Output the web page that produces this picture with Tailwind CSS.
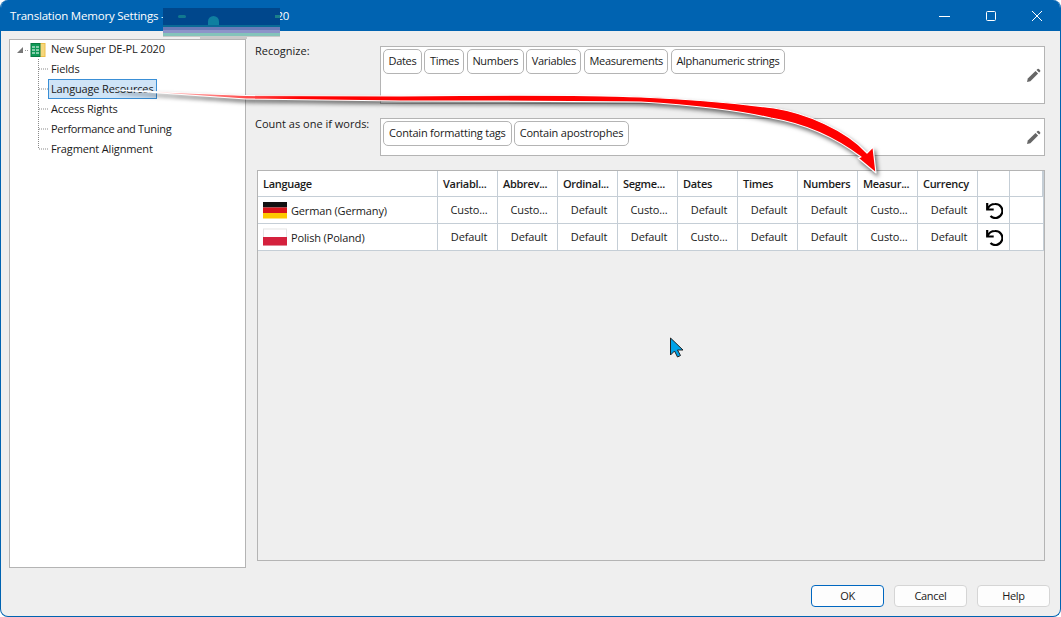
<!DOCTYPE html>
<html lang="en">
<head>
    <meta charset="UTF-8">
    <title>Translation Memory Settings</title>
    <script src="https://cdn.jsdelivr.net/npm/@tailwindcss/browser@4"></script>
</head>
<body class="bg-white font-['Open_Sans',sans-serif] text-[11px] tracking-[-0.3px] text-[#1a1a1a] overflow-hidden">
    <div class="relative w-[1061px] h-[617px] flex flex-col bg-[#efefef] border border-[#0063b1] border-t-0 rounded-t-lg rounded-b-lg overflow-hidden">

        <!-- Title bar -->
        <div class="h-[31px] shrink-0 -mx-px bg-[#0063b1] flex items-center text-white pl-[10px]">
            <span class="text-[11.5px] leading-none tracking-[-0.2px]">Translation Memory Settings -</span>
            <span class="ml-[112px] text-[11.5px] leading-none">20</span>
            <div class="ml-auto flex items-center">
                <svg class="w-[46px] h-[14px]" viewBox="0 0 46 14"><path d="M17 7.5h11" stroke="#fff" fill="none"/></svg>
                <svg class="w-[46px] h-[14px]" viewBox="0 0 46 14"><rect x="18.5" y="2.5" width="9" height="9" rx="1" stroke="#fff" fill="none"/></svg>
                <svg class="w-[46px] h-[14px] mr-[1px]" viewBox="0 0 46 14"><path d="M18 2l10 10M28 2l-10 10" stroke="#fff" fill="none"/></svg>
            </div>
        </div>

        <div class="flex flex-1 min-h-0 pt-2 pl-2 pr-[15px]">
            <!-- Tree -->
            <div class="w-[237px] h-[529px] shrink-0 bg-white border border-[#b4b4b4] relative tracking-[-0.15px]">
                <div class="h-[19px] flex items-center">
                    <svg class="ml-[6px] w-[30px] h-[14px]" viewBox="0 0 30 14">
                        <path d="M1 10l6-6v6z" fill="#777"/>
                        <path d="M9 7.500h3" stroke="#999" stroke-dasharray="1 1"/>
                        <rect x="21" y=".5" width="8" height="13" fill="#f6d77c" stroke="#eebe4a"/>
                        <rect x="15" y=".5" width="9" height="13" fill="#0f9a57" stroke="#0a7a43"/>
                        <path d="M16 4h3M20 4h3M16 7h3M20 7h3M16 10h3M20 10h3" stroke="#fff"/>
                    </svg>
                    <span class="ml-[5px]">New Super DE-PL 2020</span>
                </div>
                <div class="h-5 flex items-center pl-[41px]">Fields</div>
                <div class="h-5 flex items-center ml-[38px] w-[109px] border border-[#3a8fd6] bg-[#cfe4f7] pl-[2px]">Language Resources</div>
                <div class="h-5 flex items-center pl-[41px]">Access Rights</div>
                <div class="h-5 flex items-center pl-[41px] tracking-[-0.3px]">Performance and Tuning</div>
                <div class="h-5 flex items-center pl-[41px]">Fragment Alignment</div>
                <svg class="absolute left-[28px] top-[19px] w-[10px] h-[100px]" viewBox="0 0 10 100">
                    <path d="M.5 0v90M1 10h9M1 30h9M1 50h9M1 70h9M1 90h9" stroke="#888" fill="none" stroke-dasharray="1 1"/>
                </svg>
            </div>

            <!-- Right side -->
            <div class="flex-1 min-w-0 flex flex-col pl-[9px] pt-[7px]">
                <div class="flex items-start">
                    <div class="w-[125px] -mt-[3px] tracking-normal">Recognize:</div>
                    <div class="relative w-[665px] h-[58px] bg-white border border-[#b4b4b4] flex gap-[2.5px] pt-[2px] pl-[2px] items-start">
                        <span class="h-[25px] px-[4.5px] flex items-center bg-white border border-[#b4b4b4] rounded-[5px]">Dates</span>
                        <span class="h-[25px] px-[4.5px] flex items-center bg-white border border-[#b4b4b4] rounded-[5px]">Times</span>
                        <span class="h-[25px] px-[4.5px] flex items-center bg-white border border-[#b4b4b4] rounded-[5px]">Numbers</span>
                        <span class="h-[25px] px-[4.5px] flex items-center bg-white border border-[#b4b4b4] rounded-[5px]">Variables</span>
                        <span class="h-[25px] px-[4.5px] flex items-center bg-white border border-[#b4b4b4] rounded-[5px]">Measurements</span>
                        <span class="h-[25px] px-[4.5px] flex items-center bg-white border border-[#b4b4b4] rounded-[5px]">Alphanumeric strings</span>
                        <svg class="absolute right-[3px] top-[21px] w-[15px] h-[15px]" viewBox="0 0 15 15"><path d="M1 14l.8-3.400L9.500 3l2.600 2.600L4.400 13.200z" fill="#666"/><path d="M10.500 2l1-1a1 1 0 0 1 1.400 0l1.200 1.200a1 1 0 0 1 0 1.400l-1 1z" fill="#666"/></svg>
                    </div>
                </div>
                <div class="flex items-start mt-[14px]">
                    <div class="w-[125px] -mt-[2px] tracking-normal">Count as one if words:</div>
                    <div class="relative w-[665px] h-[38px] bg-white border border-[#b4b4b4] flex gap-[2px] pt-[2px] pl-[2px] items-start tracking-[-0.2px]">
                        <span class="h-[25px] px-[5px] flex items-center bg-white border border-[#b4b4b4] rounded-[5px]">Contain formatting tags</span>
                        <span class="h-[25px] px-[5px] flex items-center bg-white border border-[#b4b4b4] rounded-[5px]">Contain apostrophes</span>
                        <svg class="absolute right-[3px] top-[11px] w-[15px] h-[15px]" viewBox="0 0 15 15"><path d="M1 14l.8-3.400L9.500 3l2.600 2.600L4.400 13.200z" fill="#666"/><path d="M10.500 2l1-1a1 1 0 0 1 1.400 0l1.200 1.200a1 1 0 0 1 0 1.400l-1 1z" fill="#666"/></svg>
                    </div>
                </div>

                <!-- Language table -->
                <div class="mt-[14px] ml-[2px] w-[788px] h-[391px] border border-[#b4b4b4] bg-[#efefef] tracking-[-0.15px]">
                    <div class="grid grid-cols-[180px_repeat(9,60px)_32px_34px] bg-white">
                        <div class="h-[26px] flex items-center pl-[5px] pt-[1px] font-semibold tracking-[-0.3px] border-r border-b border-[#c5ced6]">Language</div>
                        <div class="h-[26px] flex items-center pl-[5px] pt-[1px] font-semibold tracking-[-0.3px] border-r border-b border-[#c5ced6]">Variabl...</div>
                        <div class="h-[26px] flex items-center pl-[5px] pt-[1px] font-semibold tracking-[-0.3px] border-r border-b border-[#c5ced6]">Abbrev...</div>
                        <div class="h-[26px] flex items-center pl-[5px] pt-[1px] font-semibold tracking-[-0.3px] border-r border-b border-[#c5ced6]">Ordinal...</div>
                        <div class="h-[26px] flex items-center pl-[5px] pt-[1px] font-semibold tracking-[-0.3px] border-r border-b border-[#c5ced6]">Segme...</div>
                        <div class="h-[26px] flex items-center pl-[5px] pt-[1px] font-semibold tracking-[-0.3px] border-r border-b border-[#c5ced6]">Dates</div>
                        <div class="h-[26px] flex items-center pl-[5px] pt-[1px] font-semibold tracking-[-0.3px] border-r border-b border-[#c5ced6]">Times</div>
                        <div class="h-[26px] flex items-center pl-[5px] pt-[1px] font-semibold tracking-[-0.3px] border-r border-b border-[#c5ced6]">Numbers</div>
                        <div class="h-[26px] flex items-center pl-[5px] pt-[1px] font-semibold tracking-[-0.3px] border-r border-b border-[#c5ced6]">Measur...</div>
                        <div class="h-[26px] flex items-center pl-[5px] pt-[1px] font-semibold tracking-[-0.3px] border-r border-b border-[#c5ced6]">Currency</div>
                        <div class="h-[26px] border-r border-b border-[#c5ced6]"></div>
                        <div class="h-[26px] border-r-2 border-b border-[#c5ced6]"></div>

                        <div class="h-[27px] flex items-center pl-[5px] border-r border-b border-[#c5ced6]">
                            <svg class="w-6 h-[18px] mr-[4px]" viewBox="0 0 24 18"><rect y="1" width="24" height="5.500" fill="#111"/><rect y="6.500" width="24" height="5.500" fill="#d8141c"/><rect y="12" width="24" height="5.500" fill="#fdc800"/></svg>
                            <span class="pt-[2px]">German (Germany)</span>
                        </div>
                        <div class="h-[27px] flex items-center justify-center pl-[3px] border-r border-b border-[#c5ced6]">Custo...</div>
                        <div class="h-[27px] flex items-center justify-center pl-[3px] border-r border-b border-[#c5ced6]">Custo...</div>
                        <div class="h-[27px] flex items-center justify-center pl-[3px] border-r border-b border-[#c5ced6]">Default</div>
                        <div class="h-[27px] flex items-center justify-center pl-[3px] border-r border-b border-[#c5ced6]">Custo...</div>
                        <div class="h-[27px] flex items-center justify-center pl-[3px] border-r border-b border-[#c5ced6]">Default</div>
                        <div class="h-[27px] flex items-center justify-center pl-[3px] border-r border-b border-[#c5ced6]">Default</div>
                        <div class="h-[27px] flex items-center justify-center pl-[3px] border-r border-b border-[#c5ced6]">Default</div>
                        <div class="h-[27px] flex items-center justify-center pl-[3px] border-r border-b border-[#c5ced6]">Custo...</div>
                        <div class="h-[27px] flex items-center justify-center pl-[3px] border-r border-b border-[#c5ced6]">Default</div>
                        <div class="h-[27px] flex items-center justify-center border-r border-b border-[#c5ced6]">
                            <svg class="w-[18px] h-[18px]" viewBox="0 0 18 18"><path d="M2.500 8C4 4.500 6.500 3 10 3a7 7 0 1 1-4.500 12" fill="none" stroke="#000" stroke-width="2.200"/><path d="M2.200 2v6.500h6.500" fill="none" stroke="#000" stroke-width="2.200"/></svg>
                        </div>
                        <div class="h-[27px] border-r border-b border-[#c5ced6]"></div>

                        <div class="h-[27px] flex items-center pl-[5px] border-r border-b border-[#c5ced6]">
                            <svg class="w-6 h-[18px] mr-[4px]" viewBox="0 0 24 18"><rect y=".5" width="24" height="17" fill="#e4e4e4"/><rect x="1" y="1.500" width="22" height="7.500" fill="#fff"/><rect y="9" width="24" height="8.500" fill="#d4213d"/></svg>
                            <span class="pt-[2px]">Polish (Poland)</span>
                        </div>
                        <div class="h-[27px] flex items-center justify-center pl-[3px] border-r border-b border-[#c5ced6]">Default</div>
                        <div class="h-[27px] flex items-center justify-center pl-[3px] border-r border-b border-[#c5ced6]">Default</div>
                        <div class="h-[27px] flex items-center justify-center pl-[3px] border-r border-b border-[#c5ced6]">Default</div>
                        <div class="h-[27px] flex items-center justify-center pl-[3px] border-r border-b border-[#c5ced6]">Default</div>
                        <div class="h-[27px] flex items-center justify-center pl-[3px] border-r border-b border-[#c5ced6]">Custo...</div>
                        <div class="h-[27px] flex items-center justify-center pl-[3px] border-r border-b border-[#c5ced6]">Default</div>
                        <div class="h-[27px] flex items-center justify-center pl-[3px] border-r border-b border-[#c5ced6]">Default</div>
                        <div class="h-[27px] flex items-center justify-center pl-[3px] border-r border-b border-[#c5ced6]">Custo...</div>
                        <div class="h-[27px] flex items-center justify-center pl-[3px] border-r border-b border-[#c5ced6]">Default</div>
                        <div class="h-[27px] flex items-center justify-center border-r border-b border-[#c5ced6]">
                            <svg class="w-[18px] h-[18px]" viewBox="0 0 18 18"><path d="M2.500 8C4 4.500 6.500 3 10 3a7 7 0 1 1-4.500 12" fill="none" stroke="#000" stroke-width="2.200"/><path d="M2.200 2v6.500h6.500" fill="none" stroke="#000" stroke-width="2.200"/></svg>
                        </div>
                        <div class="h-[27px] border-r border-b border-[#c5ced6]"></div>
                    </div>
                </div>
            </div>
        </div>

        <!-- Footer buttons -->
        <div class="h-[48px] shrink-0 flex justify-end gap-[10px] pr-[10px] pt-[17px]">
            <button class="w-[73px] h-[22px] bg-[#fdfdfd] border border-[#0067c0] rounded-[4px] text-[11px]">OK</button>
            <button class="w-[73px] h-[22px] bg-[#fdfdfd] border border-[#d5d5d5] rounded-[4px] text-[11px]">Cancel</button>
            <button class="w-[73px] h-[22px] bg-[#fdfdfd] border border-[#d5d5d5] rounded-[4px] text-[11px]">Help</button>
        </div>

        <!-- Redaction smear over the title -->
        <div class="absolute left-[162px] top-[8px] w-[117px] h-[29px] flex flex-col">
            <div class="h-[17px] bg-[#00478c]"></div>
            <div class="h-[2px] bg-[#0a6a96]"></div>
            <div class="h-[3px] bg-[#6c7bb8]"></div>
            <div class="h-[3px] bg-[#8d94c9]"></div>
            <div class="h-[3px] bg-[#84c3ba]"></div>
            <div class="h-[1px] bg-[#c9c9c9]"></div>
        </div>
        <div class="absolute left-[199px] top-[37px] w-[47px] h-[2px] bg-[#c9c9c9]"></div>
        <div class="absolute left-[177px] top-[15px] w-[8px] h-[3px] rounded bg-[#11798f]"></div>
        <div class="absolute left-[207px] top-[16px] w-[11px] h-[9px] rounded-t-md bg-[#0f7fa0]"></div>
        <div class="absolute left-[274px] top-[15px] w-[5px] h-[3px] bg-[#1a7f8a]"></div>

        <!-- Callout arrow -->
        <svg class="absolute left-0 top-0 w-[1061px] h-[617px] pointer-events-none drop-shadow-[2px_3px_2px_rgba(0,0,0,0.55)]" viewBox="0 0 1061 617">
            <defs>
                <linearGradient id="tail" gradientUnits="userSpaceOnUse" x1="116" y1="0" x2="300" y2="0">
                    <stop offset="0" stop-color="#fff"/>
                    <stop offset="1" stop-color="#f00"/>
                </linearGradient>
            </defs>
            <path d="M116 90 L245 95.500 L400 96 C480 95 580 94.500 640 97 C690 99 735 103 773 108 C805 113 845 130 866 153 L872 147 L875 173 L857 158 L860 157 C835 138 805 124 770 118 C735 110 690 105 640 102 C580 101 480 101 400 101 L245 99 Z" fill="url(#tail)" stroke="#fff" stroke-width="1.200" stroke-linejoin="round"/>
        </svg>

        <!-- Mouse pointer -->
        <svg class="absolute left-[668px] top-[337px] w-[15px] h-[22px]" viewBox="0 0 15 22">
            <path d="M1.500 1v17l4-4 3 6 3-1.500-3-5.500h5.500z" fill="#00a2e8" stroke="#222" stroke-width="1"/>
        </svg>
    </div>
</body>
</html>
